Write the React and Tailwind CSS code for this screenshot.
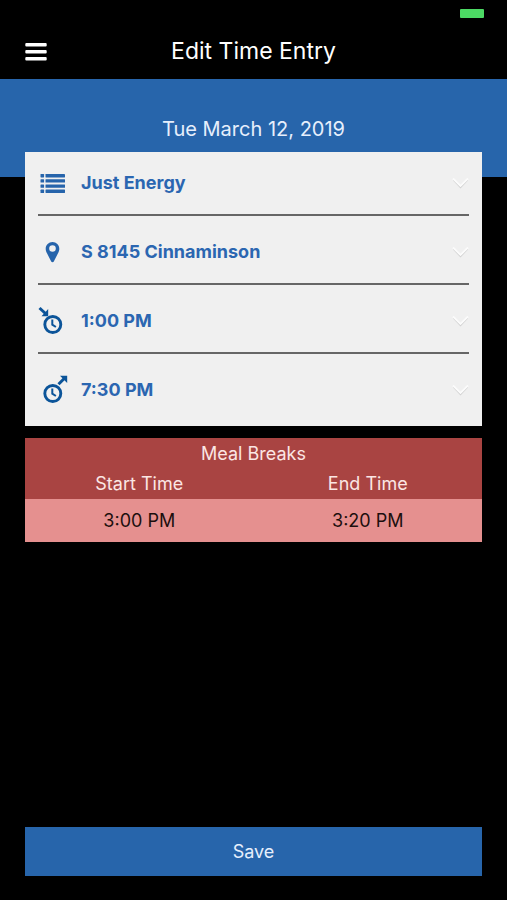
import { useState } from 'react'

const BREAKS = [{ start: '3:00 PM', end: '3:20 PM' }]

const FIELDS = [
  { name: 'company', label: 'Company', icon: ListIcon, options: ['Just Energy'] },
  { name: 'location', label: 'Location', icon: PinIcon, options: ['S 8145 Cinnaminson'] },
  { name: 'clockIn', label: 'Clock in', icon: ClockInIcon, options: ['1:00 PM'] },
  { name: 'clockOut', label: 'Clock out', icon: ClockOutIcon, options: ['7:30 PM'] },
]

function MenuIcon() {
  return (
    <svg viewBox="0 0 22 18" className="h-[18px] w-[22px]" fill="currentColor" aria-hidden="true">
      <rect x="0.3" y="0" width="21.4" height="3.6" rx="1" />
      <rect x="0.3" y="7" width="21.4" height="3.6" rx="1" />
      <rect x="0.3" y="14" width="21.4" height="3.6" rx="1" />
    </svg>
  )
}

function ListIcon() {
  return (
    <svg viewBox="0 0 30 30" className="size-[30px]" fill="#2664ab" aria-hidden="true">
      {[6, 11.2, 16.4, 21.6].map((y) => (
        <g key={y}>
          <rect x="2.5" y={y} width="3.6" height="3.4" rx="0.6" />
          <rect x="7.5" y={y} width="19.5" height="3.4" rx="0.4" />
        </g>
      ))}
    </svg>
  )
}

function PinIcon() {
  return (
    <svg viewBox="0 0 30 30" className="size-[30px]" fill="#2664ab" fillRule="evenodd" aria-hidden="true">
      <path d="M14.500 5C10.700 5 7.700 8 7.700 11.700c0 1.700.5 3 1.300 4.600l4.200 8.300c.5 1 2.100 1 2.600 0l4.200-8.300c.8-1.600 1.300-2.900 1.300-4.600C21.300 8 18.300 5 14.500 5zM14.500 8.200a3.300 3.300 0 1 1 0 6.600 3.300 3.300 0 0 1 0-6.600z" />
    </svg>
  )
}

function ClockInIcon() {
  return (
    <svg viewBox="0 0 30 30" className="size-[30px]" fill="none" stroke="#0b5499" aria-hidden="true">
      <circle cx="14.800" cy="18.500" r="8" strokeWidth="2.900" />
      <path d="M14.300 13.500v5.200l3.600 2.300" strokeWidth="2" />
      <path d="M1.500 2l6.500 6" strokeWidth="3" />
      <path d="M10.200 10.200H3.500L10.200 3z" fill="#0b5499" stroke="none" />
    </svg>
  )
}

function ClockOutIcon() {
  return (
    <svg viewBox="0 0 30 30" className="size-[30px]" fill="none" stroke="#0b5499" aria-hidden="true">
      <circle cx="14.800" cy="18.500" r="8" strokeWidth="2.900" />
      <path d="M14.300 13.500v5.200l3.600 2.300" strokeWidth="2" />
      <path d="M20.500 9.200l6-6" strokeWidth="3" />
      <path d="M29.200 0.800v7.200L22 0.800z" fill="#0b5499" stroke="none" />
    </svg>
  )
}

function Chevron() {
  return (
    <svg viewBox="0 0 18 14" className="pointer-events-none absolute right-0 h-[14px] w-[18px]" fill="none" aria-hidden="true">
      <path d="M2.500 4L9.500 11.500l7-7.500" stroke="#d0d0d0" strokeWidth="1.500" />
      <path d="M2 2.500l7.500 7.500L17 2.500" stroke="#fbfbfb" strokeWidth="1.800" />
    </svg>
  )
}

function Field({ field, value, onChange }) {
  const Icon = field.icon
  return (
    <li className="relative flex h-16 items-center border-b-2 border-[#666] last:border-transparent">
      <label htmlFor={field.name} aria-label={field.label}>
        <Icon />
      </label>
      <select
        id={field.name}
        value={value}
        onChange={onChange}
        className="h-full min-w-0 flex-1 appearance-none bg-transparent pl-[13px] text-lg font-bold text-[#2b66b1] focus:outline-none"
      >
        {field.options.map((o) => (
          <option key={o}>{o}</option>
        ))}
      </select>
      <Chevron />
    </li>
  )
}

export default function App() {
  const [entry, setEntry] = useState({
    company: 'Just Energy',
    location: 'S 8145 Cinnaminson',
    clockIn: '1:00 PM',
    clockOut: '7:30 PM',
  })

  return (
    <div className="flex min-h-screen flex-col bg-black font-['Inter',sans-serif] text-white">
      {/* Status bar */}
      <div className="flex h-6 items-center justify-end px-[23px] pt-[2px]">
        <span className="h-[9px] w-6 rounded-[1px] bg-[#4cd964]" />
      </div>

      <header className="grid h-[55px] grid-cols-[22px_1fr_22px] items-center px-[25px]">
        <button type="button" aria-label="Menu">
          <MenuIcon />
        </button>
        <h1 className="text-center text-[23px]">Edit Time Entry</h1>
      </header>

      <div className="h-[98px] bg-[#2765ab] pt-9 text-center text-xl text-[#e6effc]">
        Tue March 12, 2019
      </div>

      <main className="-mt-[25px] flex flex-1 flex-col px-[25px] pb-6">
        <ul className="flex flex-col gap-[5px] bg-[#f0f0f0] px-[13px] pb-[3px]">
          {FIELDS.map((f) => (
            <Field
              key={f.name}
              field={f}
              value={entry[f.name]}
              onChange={(e) => setEntry({ ...entry, [f.name]: e.target.value })}
            />
          ))}
        </ul>

        <table className="mt-3 w-full table-fixed text-center text-lg">
          <thead className="bg-[#a94442] text-[#fbe6e4]">
            <tr className="h-[31px]">
              <th colSpan={2} className="p-0 font-normal">Meal Breaks</th>
            </tr>
            <tr className="h-[30px]">
              <th className="p-0 font-normal">Start Time</th>
              <th className="p-0 font-normal">End Time</th>
            </tr>
          </thead>
          <tbody className="bg-[#e5908f] text-[#1c0f0e]">
            {BREAKS.map((b) => (
              <tr key={b.start} className="h-[43px]">
                <td className="p-0">{b.start}</td>
                <td className="p-0">{b.end}</td>
              </tr>
            ))}
          </tbody>
        </table>

        <button type="button" className="mt-auto h-[49px] bg-[#2765ab] text-lg text-[#e6effc]">
          Save
        </button>
      </main>
    </div>
  )
}
